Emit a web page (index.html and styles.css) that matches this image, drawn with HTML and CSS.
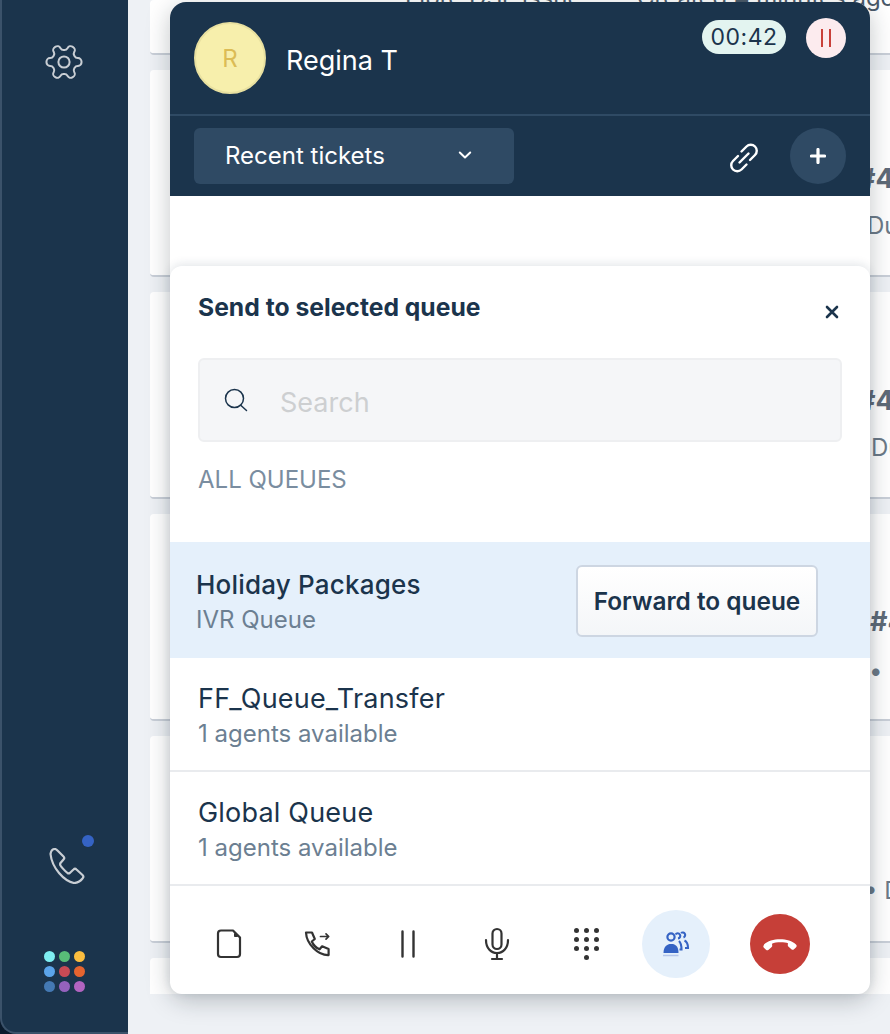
FILE: index.html
```html
<!DOCTYPE html>
<html lang="en">
<head>
  <meta charset="UTF-8" />
  <title>Call widget</title>
  <link rel="stylesheet" href="styles.css">
</head>
<body>
  <div class="app">
    <!-- Left rail -->
    <aside class="rail">
      <svg class="rail-gear" width="42" height="42" viewBox="0 0 24 24" fill="none" stroke="#c9ced4" stroke-width="1.150" stroke-linejoin="round">
        <circle cx="12" cy="12" r="3.200"/>
        <path transform="rotate(90 12 12)" d="M12.220 2h-.44a2 2 0 0 0-2 2v.18a2 2 0 0 1-1 1.730l-.43.25a2 2 0 0 1-2 0l-.15-.08a2 2 0 0 0-2.730.73l-.22.38a2 2 0 0 0 .73 2.730l.15.1a2 2 0 0 1 1 1.720v.51a2 2 0 0 1-1 1.740l-.15.09a2 2 0 0 0-.73 2.730l.22.38a2 2 0 0 0 2.730.73l.15-.08a2 2 0 0 1 2 0l.43.25a2 2 0 0 1 1 1.730V20a2 2 0 0 0 2 2h.44a2 2 0 0 0 2-2v-.18a2 2 0 0 1 1-1.730l.43-.25a2 2 0 0 1 2 0l.15.08a2 2 0 0 0 2.730-.73l.22-.39a2 2 0 0 0-.73-2.730l-.15-.08a2 2 0 0 1-1-1.740v-.5a2 2 0 0 1 1-1.740l.15-.09a2 2 0 0 0 .73-2.730l-.22-.38a2 2 0 0 0-2.730-.73l-.15.08a2 2 0 0 1-2 0l-.43-.25a2 2 0 0 1-1-1.730V4a2 2 0 0 0-2-2z"/>
      </svg>
      <div class="rail-bottom">
        <div class="rail-phone">
          <svg width="36" height="36" viewBox="0 0 36 36" fill="none" stroke="#c9ced4" stroke-width="2.200" stroke-linejoin="round">
            <path d="M1.500 6C2 3 4 1 6 1c1 0 2 1 3 2l5.500 5.500c1 1 1 2 0 3l-3 3.500c-.5.7-.5 1.500 0 2.500 1.500 2.500 3.500 4.500 7 7.500.7.5 1.500.5 2.300 0l3.700-3.500c1-1 2-1 3 0l6 5.500c1 1 1 2.500 0 3.500-2 2.500-5 4.500-8.500 4.500C15 33 3 20 1.500 6z"/>
          </svg>
          <span class="rail-dot"></span>
        </div>
        <div class="app-grid">
          <i style="background:#7eeef2"></i><i style="background:#58bd78"></i><i style="background:#fbbd3f"></i>
          <i style="background:#5ba4ea"></i><i style="background:#c84a55"></i><i style="background:#e5642f"></i>
          <i style="background:#4479b3"></i><i style="background:#9562bd"></i><i style="background:#b264c0"></i>
        </div>
      </div>
    </aside>

    <!-- Ticket list behind the widget -->
    <main class="tickets">
      <div class="ticket ticket-first"><span class="ticket-title">Fibre DSL issue</span><span>Created 4 minutes ago</span></div>
      <div class="ticket ticket-a"><b class="ticket-id">#4821</b><p class="ticket-sub">Due in 2 hours</p></div>
      <div class="ticket ticket-b"><b class="ticket-id">#4820</b><p class="ticket-sub">Due in 3 hours</p></div>
      <div class="ticket ticket-c"><b class="ticket-id">#4819</b><p class="ticket-sub">• Due in 3 hours</p></div>
      <div class="ticket ticket-d"><p class="ticket-sub">• Due in 5 hours</p></div>
      <div class="ticket ticket-last"></div>
    </main>

    <!-- Call widget -->
    <section class="widget">
      <header class="call-head">
        <div class="call-top">
          <div class="avatar">R</div>
          <div class="caller">Regina T</div>
          <div class="call-status">
            <span class="timer">00:42</span>
            <span class="rec"><i></i><i></i></span>
          </div>
        </div>
        <div class="call-tools">
          <div class="ticket-select">
            <span>Recent tickets</span>
            <svg width="16" height="16" viewBox="0 0 16 16" fill="none" stroke="#fff" stroke-width="2" stroke-linecap="round" stroke-linejoin="round"><path d="M2.800 5.500 8 10.500l5.200-5"/></svg>
          </div>
          <svg class="link-icon" width="32" height="32" viewBox="0 0 32 32" fill="none" stroke="#fff" stroke-width="2.400" stroke-linecap="round"><path d="M13.500 9.500l5-5a6 6 0 0 1 8.500 8.500l-5 5"/><path d="M18.500 22.500l-5 5a6 6 0 0 1-8.500-8.500l5-5"/><path d="M11.500 20.500l9-9"/></svg>
          <button class="add-btn">
            <svg width="16" height="16" viewBox="0 0 16 16" fill="none" stroke="#fff" stroke-width="3.200" stroke-linecap="round"><path d="M8 1.500v13M1.500 8h13"/></svg>
          </button>
        </div>
      </header>

      <div class="panel">
        <div class="panel-title">
          <h2>Send to selected queue</h2>
          <svg width="14" height="14" viewBox="0 0 14 14" fill="none" stroke="#1b344c" stroke-width="2.600" stroke-linecap="round"><path d="M2 2l10 10M12 2 2 12"/></svg>
        </div>
        <div class="search">
          <svg width="28" height="28" viewBox="0 0 28 28" fill="none" stroke="#1b344c" stroke-width="1.500" stroke-linecap="round"><circle cx="12.500" cy="12.500" r="9"/><path d="M19 19.500l5.500 5"/></svg>
          <span>Search</span>
        </div>
        <div class="section-label">ALL QUEUES</div>

        <ul class="queues">
          <li class="queue queue-active">
            <div>
              <div class="queue-name">Holiday Packages</div>
              <div class="queue-sub">IVR Queue</div>
            </div>
            <button class="forward-btn">Forward to queue</button>
          </li>
          <li class="queue">
            <div>
              <div class="queue-name">FF_Queue_Transfer</div>
              <div class="queue-sub">1 agents available</div>
            </div>
          </li>
          <li class="queue">
            <div>
              <div class="queue-name">Global Queue</div>
              <div class="queue-sub">1 agents available</div>
            </div>
          </li>
        </ul>

        <footer class="call-actions">
          <div class="act">
            <svg width="30" height="30" viewBox="0 0 30 30" fill="none" stroke="#333" stroke-width="2.200" stroke-linejoin="round"><path d="M7 1.500h12l7 7v16.500c0 2-1.200 3-3 3H7c-1.800 0-3-1-3-3V4.500c0-2 1.200-3 3-3z"/><path d="M20.500 4.500l3 3h-3z" fill="#333" stroke-width="1"/></svg>
          </div>
          <div class="act">
            <svg width="30" height="30" viewBox="0 0 30 30" fill="none" stroke="#333" stroke-width="2.200" stroke-linejoin="round" stroke-linecap="round"><path d="M3 3.500h6l2.800 6.500-3 2.500c1.500 3.500 4.300 6.300 7.800 7.800l2.500-3 6.500 2.800v6C15 26.500 3.500 15 3 3.500z"/><path d="M17.500 7.500h8M23 4.800l2.700 2.700-2.700 2.700" stroke-width="1.700"/></svg>
          </div>
          <div class="act">
            <svg width="30" height="30" viewBox="0 0 30 30" fill="none" stroke="#333" stroke-width="2.400" stroke-linecap="round"><path d="M9.500 2.500v25M20.500 2.500v25"/></svg>
          </div>
          <div class="act">
            <svg width="30" height="34" viewBox="0 0 30 34" fill="none" stroke="#333" stroke-width="2.200" stroke-linecap="round"><rect x="10.500" y="2" width="9" height="20" rx="4.500"/><path d="M4 13c0 8 4.800 13 11 13s11-5 11-13M15 26v6M10 32h10"/></svg>
          </div>
          <div class="act">
            <div class="keypad">
              <i></i><i></i><i></i><i></i><i></i><i></i><i></i><i></i><i></i><i class="key-zero"></i>
            </div>
          </div>
          <div class="act">
            <div class="act-round act-queue">
              <svg width="30" height="30" viewBox="0 0 30 30" fill="none" stroke="#3563c4" stroke-width="2.100"><circle cx="10" cy="8" r="3.600" stroke-width="2.200"/><path d="M2.500 24c0-5 2-8 6-9h3.500c4 1 5.500 4 5.500 9z" fill="#3563c4" stroke="none"/><path d="M2 26.500h15.500" stroke="#b4c6ea" stroke-width="1.500"/><path d="M14.500 5.500a2.600 2.600 0 1 1 2.500 4M20 4a2.600 2.600 0 1 1 2.500 4.500M18 12c2 2 2.500 4 2.500 8.500h-2M23.500 11.500c3 1.500 3.500 4 3.500 7.500h-3"/></svg>
            </div>
          </div>
          <div class="act-round act-hangup">
            <svg width="36" height="20" viewBox="0 0 36 20"><path d="M2 10.500C9 3.600 27 3.600 34 10.500c1 1 .9 2-.1 3l-1.900 1.700c-.8.700-1.800.7-2.600 0l-3.100-2.800c-.5-.5-.6-1-.5-1.700l.2-1.500C22.500 8 13.500 8 10 9.700l.2 1.500c.1.700 0 1.200-.5 1.700l-3.100 2.800c-.8.700-1.800.7-2.600 0l-1.900-1.700c-1-1-1.100-2-.1-3z" fill="#fff"/></svg>
          </div>
        </footer>
      </div>
    </section>
  </div>
</body>
</html>
```

FILE: styles.css
```css
* {
  margin: 0;
  padding: 0;
  box-sizing: border-box;
}

body {
  font-family: Inter, "Liberation Sans", sans-serif;
  background: #0a1a2c;
  color: #1b344c;
}

.app {
  position: relative;
  display: flex;
  width: 890px;
  height: 1034px;
  overflow: hidden;
}

/* Left rail */
.rail {
  width: 128px;
  flex: none;
  display: flex;
  flex-direction: column;
  align-items: center;
  justify-content: space-between;
  padding: 41px 2px 40px 0;
  background: #1b344c;
  border-left: 2px solid #3b526a;
  border-bottom: 2px solid #3b526a;
  border-bottom-left-radius: 16px;
}

.rail-bottom {
  display: flex;
  flex-direction: column;
  align-items: center;
  gap: 67px;
}

.rail-phone {
  position: relative;
  width: 36px;
  height: 36px;
  margin-left: 5px;
}

.rail-dot {
  position: absolute;
  top: -13px;
  right: -9px;
  width: 12px;
  height: 12px;
  border-radius: 50%;
  background: #3563c4;
}

.app-grid {
  display: grid;
  grid-template-columns: repeat(3, 11px);
  gap: 4px;
}

.app-grid i {
  width: 11px;
  height: 11px;
  border-radius: 50%;
}

/* Tickets behind the widget */
.tickets {
  flex: 1;
  display: flex;
  flex-direction: column;
  gap: 15px;
  padding-left: 22px;
  overflow: hidden;
  background: #eef1f5;
}

.ticket {
  flex: none;
  height: 207px;
  width: 800px;
  padding-top: 94px;
  background: #fff;
  border-bottom: 2px solid #c9cfd8;
  border-radius: 4px;
  white-space: nowrap;
}

.ticket-first {
  height: 55px;
  padding: 0 0 0 255px;
  font-size: 24px;
  line-height: 30px;
  color: #4a5a6a;
}

.ticket-first span {
  display: inline-block;
  margin-top: -17px;
  vertical-align: top;
}

.ticket-title {
  width: 232px;
}

.ticket-last {
  height: 36px;
  padding: 0;
  border-bottom: 0;
  border-radius: 4px 4px 0 0;
}

.ticket-id {
  display: block;
  font-size: 27px;
  line-height: 30px;
  color: #5f6b78;
}

.ticket-sub {
  margin-top: 18px;
  font-size: 24px;
  line-height: 28px;
  color: #6c7a88;
}

.ticket-a .ticket-id,
.ticket-b .ticket-id {
  margin-left: 708px;
}

.ticket-a .ticket-sub {
  margin-left: 717px;
}

.ticket-b .ticket-sub {
  margin-left: 721px;
}

.ticket-c .ticket-id {
  margin: -1px 0 0 720px;
}

.ticket-c .ticket-sub {
  margin: 22px 0 0 719px;
}

.ticket-d .ticket-sub {
  margin: 47px 0 0 714px;
}

/* Call widget */
.widget {
  position: absolute;
  left: 170px;
  top: 2px;
  width: 700px;
  height: 992px;
  background: #fff;
  border-radius: 16px;
  box-shadow: 0 6px 24px rgba(20, 30, 40, 0.26);
}

.call-head {
  height: 194px;
  background: #1b344c;
  border-radius: 16px 16px 0 0;
}

.call-top {
  display: flex;
  align-items: flex-start;
  height: 114px;
  padding: 20px 24px 0;
  border-bottom: 2px solid #2f4a64;
}

.avatar {
  display: flex;
  align-items: center;
  justify-content: center;
  width: 72px;
  height: 72px;
  border-radius: 50%;
  background: #f7efac;
  border: 2px solid #e8e0a0;
  color: #dcbc55;
  font-size: 24px;
}

.caller {
  margin: 22px 0 0 20px;
  font-size: 27px;
  line-height: 34px;
  color: #fff;
}

.call-status {
  margin: -4px 0 0 auto;
  display: flex;
  align-items: center;
  gap: 20px;
}

.timer {
  width: 84px;
  height: 34px;
  margin-top: -2px;
  border-radius: 17px;
  background: #e3f4f0;
  color: #1b344c;
  font-size: 23px;
  line-height: 34px;
  text-align: center;
  letter-spacing: 0.5px;
}

.rec {
  display: flex;
  align-items: center;
  justify-content: center;
  gap: 6px;
  width: 40px;
  height: 40px;
  border-radius: 50%;
  background: #fcebee;
}

.rec i {
  width: 2px;
  height: 18px;
  background: #c9403a;
}

.call-tools {
  display: flex;
  align-items: center;
  padding: 12px 24px 0;
}

.ticket-select {
  display: flex;
  align-items: center;
  justify-content: space-between;
  width: 320px;
  height: 56px;
  padding: 0 41px 2px 31px;
  background: #2f4a64;
  border-radius: 6px;
  color: #fff;
  font-size: 24px;
}

.link-icon {
  margin: 4px 0 0 auto;
}

.add-btn {
  display: flex;
  align-items: center;
  justify-content: center;
  width: 56px;
  height: 56px;
  margin-left: 30px;
  border: 0;
  border-radius: 50%;
  background: #2f4a64;
}

/* Queue panel */
.panel {
  position: absolute;
  left: 0;
  right: 0;
  top: 264px;
  bottom: 0;
  background: #fff;
  border-radius: 12px;
  box-shadow: 0 -2px 10px rgba(27, 52, 76, 0.12);
}

.panel-title {
  display: flex;
  align-items: center;
  justify-content: space-between;
  padding: 25px 31px 1px 28px;
}

.panel-title h2 {
  font-size: 24.7px;
  line-height: 32px;
  font-weight: 700;
}

.panel-title svg {
  margin-top: 10px;
}

.search {
  display: flex;
  align-items: center;
  gap: 30px;
  height: 84px;
  margin: 34px 28px 0;
  padding: 0 22px;
  background: #f5f6f8;
  border: 2px solid #eeeff1;
  border-radius: 6px;
  color: #cdcfd1;
  font-size: 27px;
}

.search span {
  margin-top: 4px;
}

.section-label {
  margin: 23px 28px 0;
  font-size: 24px;
  line-height: 30px;
  color: #7a8da0;
}

.queues {
  list-style: none;
  margin-top: 47px;
}

.queue {
  display: flex;
  align-items: center;
  justify-content: space-between;
  height: 114px;
  padding: 2px 52px 0 28px;
  border-bottom: 2px solid #e9ebee;
}

.queue-active {
  height: 116px;
  padding: 0 52px 0 26px;
  background: #e5f0fb;
  border-bottom-color: #e5f0fb;
}

.queue-name {
  font-size: 27px;
  line-height: 34px;
  letter-spacing: 0.2px;
}

.queue-active .queue-name {
  margin-top: 4px;
  font-size: 26px;
  font-weight: 500;
}

.queue-sub {
  margin-top: 3px;
  font-size: 24px;
  line-height: 30px;
  color: #6c7f92;
}

.forward-btn {
  width: 242px;
  height: 72px;
  margin-top: 3px;
  background: linear-gradient(#fff, #f4f6f8);
  border: 2px solid #cdd6e2;
  border-radius: 6px;
  color: #1b344c;
  font-family: inherit;
  font-size: 24.4px;
  font-weight: 600;
}

.call-actions {
  display: flex;
  align-items: center;
  height: 108px;
  padding: 8px 0 0 14px;
}

.act {
  flex: none;
  display: flex;
  justify-content: center;
  width: 89.5px;
}

.keypad {
  display: grid;
  grid-template-columns: repeat(3, 5px);
  column-gap: 4.8px;
  row-gap: 4px;
}

.keypad i {
  width: 5px;
  height: 5px;
  border-radius: 50%;
  background: #333;
}

.keypad .key-zero {
  grid-column: 2;
}

.act-round {
  display: flex;
  align-items: center;
  justify-content: center;
  flex: none;
  border-radius: 50%;
}

.act-queue {
  width: 68px;
  height: 68px;
  background: #e5f0fb;
}

.act-hangup {
  width: 60px;
  height: 60px;
  margin-left: 29px;
  background: #c63f38;
}
```
